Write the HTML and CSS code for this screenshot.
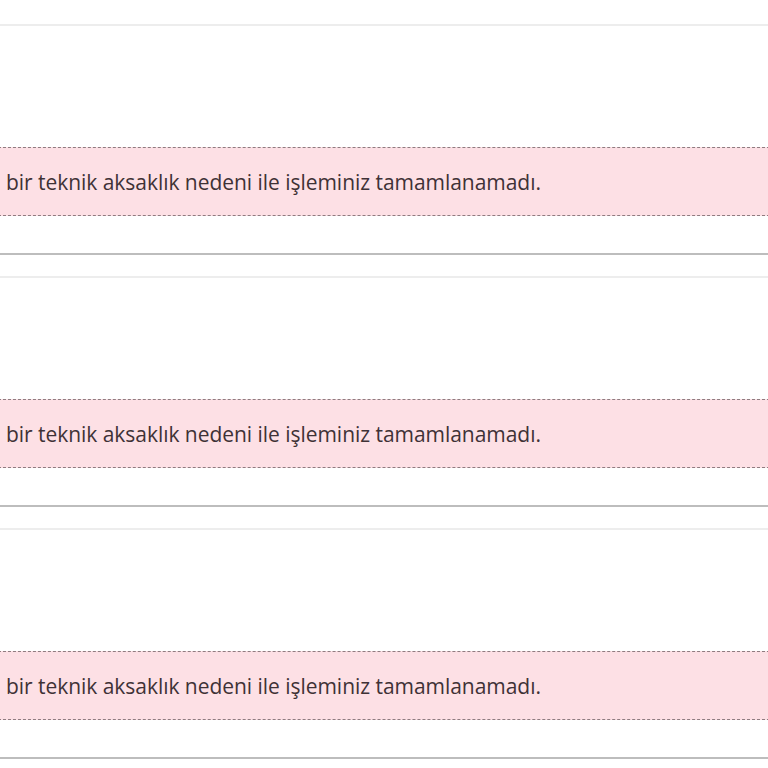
FILE: index.html
```html
<!DOCTYPE html>
<html lang="tr">
<head>
<meta charset="utf-8">
<link rel="stylesheet" href="styles.css">
</head>
<body>
<div class="list">
  <section class="card">
    <div class="alert">bir teknik aksaklık nedeni ile işleminiz tamamlanamadı.</div>
  </section>
  <section class="card">
    <div class="alert">bir teknik aksaklık nedeni ile işleminiz tamamlanamadı.</div>
  </section>
  <section class="card">
    <div class="alert">bir teknik aksaklık nedeni ile işleminiz tamamlanamadı.</div>
  </section>
</div>
</body>
</html>
```
FILE: styles.css
```css
html, body {
  margin: 0;
  padding: 0;
  background: #ffffff;
}
.list {
  display: flex;
  flex-direction: column;
  gap: 21px;
  padding-top: 24px;
  margin-left: -2px;
  margin-right: -2px;
}
.card {
  border-top: 2px solid #ededed;
  border-bottom: 2px solid #bdbdbd;
  padding: 121px 0 37px;
  background: #fff;
}
.alert {
  height: 67px;
  box-sizing: content-box;
  border-top: 1px dashed #8f7c80;
  border-bottom: 1px dashed #8f7c80;
  background: #fde0e5;
  display: flex;
  align-items: center;
  padding-left: 8px;
  font-family: "Open Sans", sans-serif;
  font-size: 21px;
  color: #3f3236;
  letter-spacing: -0.04px;
}
```
